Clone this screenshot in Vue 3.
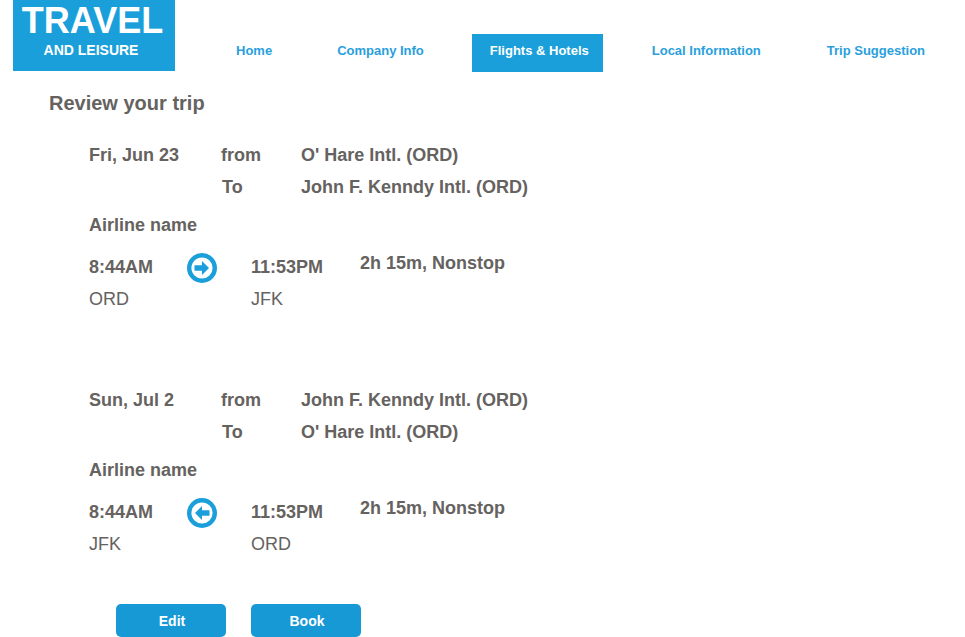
<script setup>
const trips = [
  { date: 'Fri, Jun 23', from: "O' Hare Intl. (ORD)", to: 'John F. Kenndy Intl. (ORD)', a: 'ORD', b: 'JFK', dir: 'right' },
  { date: 'Sun, Jul 2', from: 'John F. Kenndy Intl. (ORD)', to: "O' Hare Intl. (ORD)", a: 'JFK', b: 'ORD', dir: 'left' }
]
const nav = ['Home', 'Company Info', 'Flights & Hotels', 'Local Information', 'Trip Suggestion']
</script>

<template>
  <div class="page">
    <header class="header">
      <div class="logo">
        <div class="logo-main">TRAVEL</div>
        <div class="logo-sub">AND LEISURE</div>
      </div>
      <nav class="nav">
        <a v-for="n in nav" :key="n" class="nav-item" :class="{ active: n === 'Flights & Hotels' }">{{ n }}</a>
      </nav>
    </header>
    <h1 class="title">Review your trip</h1>
    <section v-for="t in trips" :key="t.date" class="trip">
      <div class="route">
        <span>{{ t.date }}</span><span>from</span><span>{{ t.from }}</span>
        <span></span><span class="to">To</span><span>{{ t.to }}</span>
      </div>
      <div class="airline">Airline name</div>
      <div class="times">
        <div class="t1">8:44AM</div>
        <svg class="icon" viewBox="0 0 30 30" width="30" height="30">
          <circle cx="15" cy="15" r="12.8" fill="none" stroke="#1a9fda" stroke-width="4.4" />
          <path v-if="t.dir === 'right'" d="M7.5 12.2H15V8l7 7-7 7v-4.2H7.5z" fill="#1a9fda" />
          <path v-else d="M22.5 12.2H15V8l-7 7 7 7v-4.2h7.5z" fill="#1a9fda" />
        </svg>
        <div class="t2">11:53PM</div>
        <div class="dur">2h 15m, Nonstop</div>
        <div class="code">{{ t.a }}</div>
        <div></div>
        <div class="code">{{ t.b }}</div>
      </div>
    </section>
    <div class="actions">
      <button class="btn">Edit</button>
      <button class="btn">Book</button>
    </div>
  </div>
</template>

<style>
html, body { margin: 0; background: #fff; }
</style>

<style scoped>
.page {
  width: 965px;
  height: 637px;
  overflow: hidden;
  font-family: "Liberation Sans", Arial, sans-serif;
  color: #656260;
  box-sizing: border-box;
}
.header { display: flex; align-items: flex-end; padding-left: 13px; height: 72px; }
.logo {
  width: 162px;
  height: 71px;
  margin-bottom: 1px;
  background: #1a9fda;
  color: #fff;
  text-align: center;
  font-weight: bold;
}
.logo-main { font-size: 36px; line-height: 41px; margin-left: -3px; }
.logo-sub { font-size: 14px; line-height: 16px; margin: 1px 0 0 -6px; }
.nav { display: flex; gap: 34px; margin-left: 43px; }
.nav-item {
  height: 38px;
  line-height: 33px;
  padding: 0 13px 0 18px;
  font-size: 13px;
  font-weight: bold;
  color: #2a9fdc;
}
.nav-item.active {
  background: #1a9fda;
  color: #fff;
  padding-right: 14px;
  margin: 0 -3px 0 1px;
}
.nav-item:last-child { margin-left: 1px; }
.title { margin: 20px 0 0 49px; font-size: 20px; line-height: 23px; font-weight: bold; }
.trip { margin-left: 89px; height: 245px; font-size: 18px; font-weight: bold; }
.route {
  display: grid;
  grid-template-columns: 132px 80px 1fr;
  grid-auto-rows: 32px;
  padding-top: 24px;
  line-height: 32px;
}
.to { margin-left: 1px; }
.airline { margin-top: 6px; line-height: 32px; }
.times {
  display: grid;
  grid-template-columns: 98px 64px 109px 1fr;
  grid-template-rows: 32px 32px;
  margin-top: 10px;
  line-height: 32px;
  align-items: center;
}
.icon { margin-top: 1px; }
.dur { margin-top: -8px; }
.code { font-weight: normal; font-size: 18px; line-height: 32px; }
.actions { display: flex; gap: 25px; margin-left: 116px; margin-top: -1px; }
.btn {
  width: 110px;
  height: 33px;
  padding: 0 0 0 2px;
  border: 0;
  border-radius: 5px;
  background: #1799d6;
  color: #fff;
  font: bold 14px "Liberation Sans", Arial, sans-serif;
}
</style>
